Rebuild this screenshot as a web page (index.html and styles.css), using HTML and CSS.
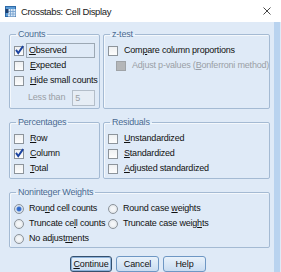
FILE: index.html
```html
<!DOCTYPE html>
<html lang="en">
<head>
    <meta charset="UTF-8">
    <title>Crosstabs: Cell Display</title>
    <link rel="stylesheet" href="styles.css">
</head>
<body>
    <div class="window">
        <div class="titlebar">
            <svg class="app-icon" viewBox="0 0 11 11" width="11" height="11">
                <rect x="0.5" y="0.5" width="10" height="10" fill="#5b9bd5" stroke="#2e6aa8"/>
                <rect x="3" y="3" width="7.5" height="7.5" fill="#dbe9f7"/>
                <path d="M3 5.5H10.5M3 8H10.5M5.5 3V10.5M8 3V10.5" stroke="#6f9ccb" stroke-width="0.8"/>
                <rect x="0.5" y="3" width="3" height="4" fill="#1d3f6e"/>
            </svg>
            <span class="title">Crosstabs: Cell Display</span>
            <svg class="close" viewBox="0 0 8 8" width="8" height="8">
                <path d="M0.5 0.5L7.5 7.5M7.5 0.5L0.5 7.5" stroke="#333" stroke-width="0.9"/>
            </svg>
        </div>

        <div class="client">
            <div class="group-row">
                <fieldset class="group">
                    <legend>Counts</legend>
                    <div class="opt">
                        <span class="box"><svg viewBox="0 0 9 9"><path d="M1.8 4.4L3.8 7.2L8.2 1"/></svg></span>
                        <span class="label focused"><u>O</u>bserved</span>
                    </div>
                    <div class="opt"><span class="box"></span><span class="label"><u>E</u>xpected</span></div>
                    <div class="opt"><span class="box"></span><span class="label"><u>H</u>ide small counts</span></div>
                    <div class="opt less">
                        <span class="label muted">Less than</span>
                        <span class="field">5</span>
                    </div>
                </fieldset>

                <fieldset class="group">
                    <legend>z-test</legend>
                    <div class="opt"><span class="box"></span><span class="label">Com<u>p</u>are column proportions</span></div>
                    <div class="opt indent">
                        <span class="box disabled"></span>
                        <span class="label muted">Adjust p-values (<u>B</u>onferroni method)</span>
                    </div>
                </fieldset>
            </div>

            <div class="group-row">
                <fieldset class="group">
                    <legend>Percentages</legend>
                    <div class="opt"><span class="box"></span><span class="label"><u>R</u>ow</span></div>
                    <div class="opt">
                        <span class="box"><svg viewBox="0 0 9 9"><path d="M1.8 4.4L3.8 7.2L8.2 1"/></svg></span>
                        <span class="label"><u>C</u>olumn</span>
                    </div>
                    <div class="opt"><span class="box"></span><span class="label"><u>T</u>otal</span></div>
                </fieldset>

                <fieldset class="group">
                    <legend>Residuals</legend>
                    <div class="opt"><span class="box"></span><span class="label"><u>U</u>nstandardized</span></div>
                    <div class="opt"><span class="box"></span><span class="label"><u>S</u>tandardized</span></div>
                    <div class="opt"><span class="box"></span><span class="label"><u>A</u>djusted standardized</span></div>
                </fieldset>
            </div>

            <fieldset class="group weights">
                <legend>Noninteger Weights</legend>
                <div class="radio-grid">
                    <div class="opt"><span class="radio on"></span><span class="label">Rou<u>n</u>d cell counts</span></div>
                    <div class="opt"><span class="radio"></span><span class="label">Round case <u>w</u>eights</span></div>
                    <div class="opt"><span class="radio"></span><span class="label">Truncate ce<u>l</u>l counts</span></div>
                    <div class="opt"><span class="radio"></span><span class="label">Truncate case weig<u>h</u>ts</span></div>
                    <div class="opt"><span class="radio"></span><span class="label">No adjust<u>m</u>ents</span></div>
                </div>
            </fieldset>

            <div class="buttons">
                <button class="btn default"><u>C</u>ontinue</button>
                <button class="btn">Cancel</button>
                <button class="btn">Help</button>
            </div>
        </div>
    </div>
</body>
</html>
```

FILE: styles.css
```css
body {
    margin: 0;
    padding: 0;
    font-family: "Liberation Sans", Arial, sans-serif;
    font-size: 9px;
    letter-spacing: -0.2px;
    color: #111;
}

.window {
    width: 281px;
    height: 272px;
    background-color: #dfeaf7; /* SPSS light blue */
    overflow: hidden;
}

.titlebar {
    height: 22px;
    background-color: #fff;
    display: flex;
    align-items: center;
    padding: 0 10px 0 5px;
}

.app-icon {
    flex: none;
}

.title {
    flex: 1;
    margin-left: 5px;
    font-size: 9.5px;
    letter-spacing: -0.35px;
    color: #222;
}

.client {
    padding: 7px 0 0 9px;
    height: 250px;
    border-left: 1px solid #8fb3dc;
    border-right: 6px solid #b9d3ef;
    box-sizing: border-box;
    width: 281px;
    margin-left: -1px;
}

.group-row {
    display: grid;
    grid-template-columns: 91px 167px;
    gap: 3px;
    margin-bottom: 8px;
}

.group {
    margin: 0;
    padding: 3px 4px 2px 4px;
    border: 1px solid #a4bad3;
    border-radius: 2px;
    min-width: 0;
    box-shadow: inset 1px 1px 0 #f4f8fc;
}

.group legend {
    padding: 0 2px;
    margin-left: 2px;
    line-height: 11px;
    color: #4a6a92;
}

.weights {
    width: 261px;
    box-sizing: border-box;
    padding-bottom: 1px;
}

.opt {
    display: flex;
    align-items: center;
    height: 15px;
    white-space: nowrap;
}

.opt.indent {
    padding-left: 8px;
}

.box {
    flex: none;
    width: 8px;
    height: 8px;
    border: 1px solid #8d949b;
    background: linear-gradient(#eef0f2, #fdfdfd);
    margin-right: 4px;
    position: relative;
}

.box svg {
    position: absolute;
    left: -1px;
    top: -2px;
    width: 10px;
    height: 10px;
    fill: none;
    stroke: #1b43a0;
    stroke-width: 1.7;
}

.box.disabled {
    background: #b4b6b8;
    border-color: #9fa3a7;
}

.label {
    line-height: 13px;
    padding: 0 1px;
    border: 1px solid transparent;
}

.label.focused {
    flex: 1;
    border-color: #9ca8b4;
    margin-left: -2px;
    padding-left: 2px;
}

.muted {
    color: #9a9fa6;
}

.opt.less {
    height: 17px;
    margin-top: 1px;
    padding-left: 12px;
}

.field {
    margin-left: 5px;
    width: 26px;
    height: 14px;
    line-height: 14px;
    border: 1px solid #b4bec9;
    background-color: #e6edf5;
    color: #9a9fa6;
    padding-left: 2px;
}

.radio-grid {
    display: grid;
    grid-template-columns: 94px 1fr;
}

.radio {
    flex: none;
    width: 8px;
    height: 8px;
    border: 1px solid #8c939a;
    border-radius: 50%;
    background: radial-gradient(circle, #f4f6f8 30%, #d6dbe0 100%);
    margin-right: 3px;
}

.radio.on {
    background: radial-gradient(circle, #2c63c4 0, #3a72d0 35%, #c9d9ee 50%, #eef2f6 100%);
}

.buttons {
    display: flex;
    justify-content: center;
    gap: 4px;
    margin-top: 8px;
    padding-right: 7px;
}

.btn {
    font-family: "Liberation Sans", Arial, sans-serif;
    font-size: 9px;
    letter-spacing: -0.1px;
    color: #111;
    width: 43px;
    height: 16px;
    padding: 0;
    border: 1px solid #6e97c4;
    border-radius: 3px;
    background: linear-gradient(#e9f2fb, #c9dcf1);
}

.btn.default {
    width: 42px;
    border-color: #34506f;
    box-shadow: inset 0 0 0 1px #8db2da;
}
```
